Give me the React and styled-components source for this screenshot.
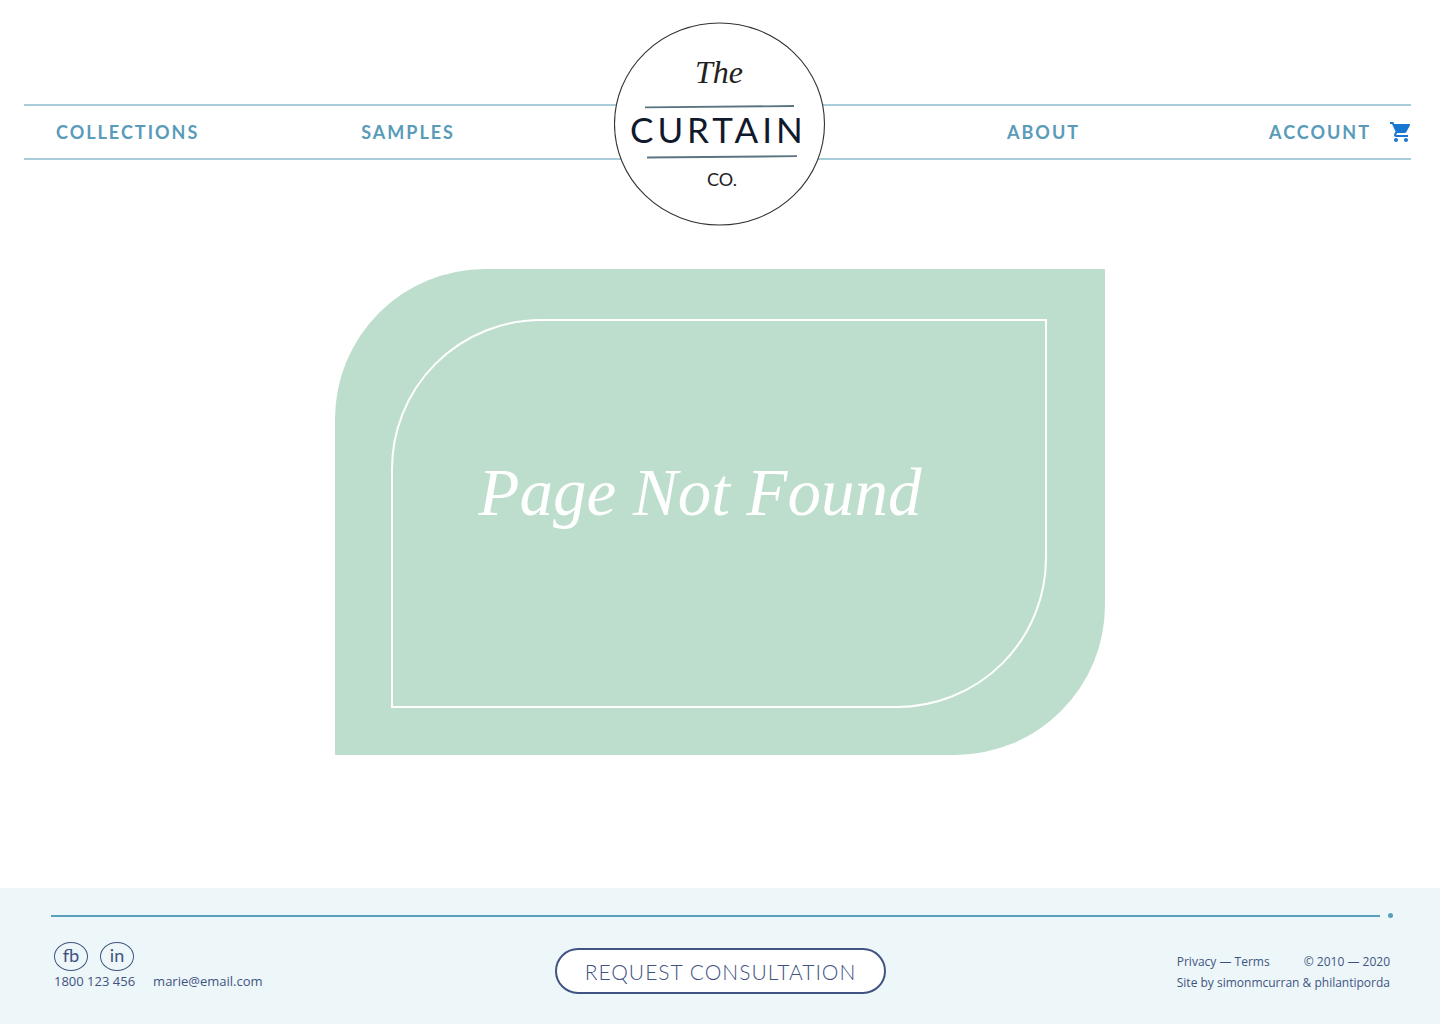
import React from "react";
import styled, { createGlobalStyle } from "styled-components";
import { MdShoppingCart } from "react-icons/md";

const GlobalStyle = createGlobalStyle`
  *, *::before, *::after { box-sizing: border-box; }
  body { margin: 0; background: #fff; font-family: Lato, sans-serif; }
  a { color: inherit; text-decoration: none; }
`;

const Page = styled.div`
  min-height: 100vh;
  display: flex;
  flex-direction: column;
`;

const Header = styled.header`
  position: relative;
  padding: 104px 29px 66px 24px;
`;

const Nav = styled.nav`
  display: flex;
  justify-content: space-between;
  align-items: center;
  height: 56px;
  padding-left: 32px;
  border: solid #a9cddb;
  border-width: 2px 0;
`;

const NavGroup = styled.div`
  display: flex;
  justify-content: space-between;
  align-items: center;
  flex: 0 1 ${(p) => p.$width}px;
`;

const NavLink = styled.a`
  color: #599bb8;
  font-size: 18px;
  line-height: 24px;
  font-weight: 700;
  letter-spacing: 2px;
`;

const AccountLinks = styled.div`
  display: flex;
  align-items: center;
  gap: 18px;
  margin-right: -2px;
`;

const CartLink = styled.a`
  display: flex;
  color: #1976d2;
  font-size: 24px;
`;

const LogoLink = styled.a`
  position: absolute;
  top: 22px;
  left: 50%;
  transform: translateX(-50%);
  display: flex;
`;

const Main = styled.main`
  flex: 1;
  display: flex;
  justify-content: center;
  align-items: flex-start;
  padding: 43px 24px;
`;

const Leaf = styled.section`
  display: flex;
  width: 770px;
  max-width: 100%;
  min-height: 486px;
  padding: 50px 58px 47px 56px;
  background: #bddecc;
  border-radius: 150px 0;
`;

const LeafOutline = styled.div`
  flex: 1;
  display: flex;
  justify-content: center;
  align-items: center;
  padding: 0 38px 44px 0;
  border: 2px solid #fff;
  border-radius: 150px 0;
`;

const Title = styled.h1`
  margin: 0;
  color: #fff;
  font-family: "Liberation Serif", serif;
  font-size: 67px;
  line-height: 80px;
  font-style: italic;
  font-weight: 400;
  text-align: center;
`;

const Footer = styled.footer`
  padding: 24px 50px 24px 51px;
  background: #edf6f8;
  color: #3f5482;
`;

const Rule = styled.div`
  display: flex;
  align-items: center;
  gap: 8px;
  height: 7px;
  color: #5a9fba;
  &::before { content: ""; flex: 1; height: 2px; background: currentColor; }
  &::after { content: ""; width: 5px; height: 5px; margin-right: -3px; border-radius: 50%; background: currentColor; }
`;

const FooterRow = styled.div`
  display: grid;
  grid-template-columns: 1fr auto 1fr;
  align-items: center;
  padding-top: 23px;
`;

const Contact = styled.div`
  padding: 0 0 9px 3px;
`;

const Socials = styled.div`
  display: flex;
  gap: 12px;
`;

const Social = styled.a`
  display: flex;
  justify-content: center;
  align-items: center;
  width: 34px;
  height: 29px;
  padding-bottom: 3px;
  border: 1px solid #3f5482;
  border-radius: 50%;
  font-size: 18px;
  line-height: 24px;
`;

const Details = styled.div`
  display: flex;
  gap: 18px;
  font-family: "Open Sans", sans-serif;
  font-size: 13px;
  line-height: 20px;
`;

const Consult = styled.button`
  height: 46px;
  padding: 0 28px;
  border: 2px solid #3f5482;
  border-radius: 23px;
  background: #fff;
  color: #3f5482;
  font-family: Lato, sans-serif;
  font-size: 21px;
  font-weight: 300;
  letter-spacing: 1px;
  cursor: pointer;
`;

const Legal = styled.div`
  justify-self: end;
  padding-top: 2px;
  font-family: "Open Sans", sans-serif;
  font-size: 12px;
  line-height: 21px;
`;

const LegalRow = styled.div`
  display: flex;
  justify-content: space-between;
`;

function Logo() {
  return (
    <svg width="212" height="205" viewBox="0 0 212 205" role="img" aria-label="The Curtain Co.">
      <ellipse cx="105.5" cy="102" rx="105" ry="101" fill="#fff" stroke="#333" strokeWidth="1.1" />
      <text x="81" y="61" fill="#222" fontFamily="Liberation Serif, serif" fontStyle="italic" fontSize="32">The</text>
      <path d="M31 85.3 L180 84" stroke="#5b7481" strokeWidth="1.8" />
      <path d="M33 135.5 L183 134.2" stroke="#5b7481" strokeWidth="1.8" />
      <text x="16" y="121" fill="#101a2c" fontFamily="Lato, sans-serif" fontSize="35" letterSpacing="4">CURTAIN</text>
      <text x="93" y="164" fill="#222" fontFamily="Lato, sans-serif" fontSize="18">CO.</text>
    </svg>
  );
}

export default function App() {
  return (
    <Page>
      <GlobalStyle />
      <Header>
        <Nav aria-label="Main">
          <NavGroup $width={399}>
            <NavLink href="#collections">COLLECTIONS</NavLink>
            <NavLink href="#samples">SAMPLES</NavLink>
          </NavGroup>
          <NavGroup $width={404}>
            <NavLink href="#about">ABOUT</NavLink>
            <AccountLinks>
              <NavLink href="#account">ACCOUNT</NavLink>
              <CartLink href="#cart" aria-label="Cart"><MdShoppingCart /></CartLink>
            </AccountLinks>
          </NavGroup>
        </Nav>
        <LogoLink href="#home"><Logo /></LogoLink>
      </Header>
      <Main>
        <Leaf>
          <LeafOutline>
            <Title>Page Not Found</Title>
          </LeafOutline>
        </Leaf>
      </Main>
      <Footer>
        <Rule />
        <FooterRow>
          <Contact>
            <Socials>
              <Social href="#facebook">fb</Social>
              <Social href="#linkedin">in</Social>
            </Socials>
            <Details>
              <a href="tel:1800123456">1800 123 456</a>
              <a href="mailto:marie@email.com">marie@email.com</a>
            </Details>
          </Contact>
          <Consult type="button">REQUEST CONSULTATION</Consult>
          <Legal>
            <LegalRow>
              <a href="#privacy">Privacy — Terms</a>
              <span>© 2010 — 2020</span>
            </LegalRow>
            <div>Site by simonmcurran &amp; philantiporda</div>
          </Legal>
        </FooterRow>
      </Footer>
    </Page>
  );
}
